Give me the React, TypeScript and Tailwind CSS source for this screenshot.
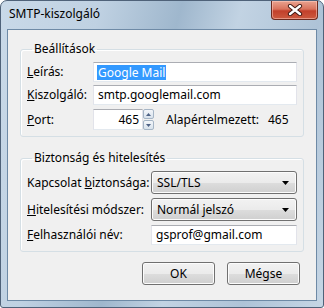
import React from "react";

const inputCls =
  "h-[20px] bg-white border border-[#e2e3ea] border-t-[#abadb3] border-b-[#e3e9ef] px-[3px] flex items-center leading-none";

const btnCls =
  "h-[23px] rounded-[3px] border border-[#707070] bg-[linear-gradient(#f2f2f2_0%,#ebebeb_50%,#dddddd_51%,#cfcfcf_100%)] shadow-[inset_0_0_0_1px_#fcfcfc] flex items-center";

function Combo({ value }: { value: string }) {
  return (
    <div className={`${btnCls} h-[22px] px-[5px] justify-between`}>
      <span>{value}</span>
      <svg width="7" height="4" viewBox="0 0 7 4" className="mr-[2px]">
        <path d="M0 0h7L3.5 4z" fill="#000" />
      </svg>
    </div>
  );
}

function Spinner() {
  return (
    <div className="w-[11px] h-[21px] flex flex-col gap-[1px] ml-[0px]">
      {[0, 1].map((i) => (
        <div
          key={i}
          className="flex-1 rounded-[2px] border border-[#a5b5c6] bg-[linear-gradient(#f3f6fa,#d8e2ec)] flex items-center justify-center"
        >
          <svg width="5" height="3" viewBox="0 0 5 3">
            <path d={i === 0 ? "M0 3h5L2.5 0z" : "M0 0h5L2.5 3z"} fill="#4d6185" />
          </svg>
        </div>
      ))}
    </div>
  );
}

export default function App() {
  return (
    <div className="w-[324px] h-[308px] font-['Noto_Sans',sans-serif] text-[12px] text-black">
      <div className="h-full flex flex-col rounded-t-[7px] rounded-b-[3px] border border-[#4f6279] bg-[linear-gradient(105deg,#c9d9e8_0%,#bfd1e2_25%,#9fb7cd_45%,#c2d3e3_60%,#aec3d7_80%,#c6d6e5_100%)]">
        {/* title bar */}
        <div className="h-[28px] flex items-start">
          <span className="pl-[8px] pt-[5px] leading-[16px]">SMTP-kiszolgáló</span>
          <div className="ml-auto mr-[5px] w-[47px] h-[19px] rounded-b-[4px] border border-t-0 border-[#6b2a1f] bg-[linear-gradient(#e9a390_0%,#d9735d_45%,#c2402b_55%,#cc5a3f_100%)] shadow-[inset_0_0_0_1px_rgba(255,210,200,0.5)] flex items-center justify-center">
            <svg width="16" height="12" viewBox="0 0 16 12">
              <path d="M3 2l10 8M13 2L3 10" stroke="#3d1711" strokeWidth="4.2" strokeLinecap="round" />
              <path d="M3 2l10 8M13 2L3 10" stroke="#fff" strokeWidth="2.4" strokeLinecap="round" />
            </svg>
          </div>
        </div>

        {/* client area */}
        <div className="flex-1 mx-[6px] mb-[6px] border border-[#6e8aa6] bg-[#f0f0f0] px-[12px] pt-[11px] flex flex-col">
          <fieldset className="rounded-[3px] border border-[#d5dfe5] px-[6px] pt-[5px] pb-[6px] shadow-[inset_1px_1px_0_#fff]">
            <legend className="ml-[5px] px-[2px] leading-[16px]">Beállítások</legend>
            <div className="grid grid-cols-[66px_1fr] items-center gap-y-[3px]">
              <span>
                <u>L</u>eírás:
              </span>
              <div className={inputCls}>
                <span className="bg-[#3399ff] text-white px-[1px] leading-[15px]">Google Mail</span>
              </div>
              <span>
                <u>K</u>iszolgáló:
              </span>
              <div className={inputCls}>
                <span className="pl-[1px]">smtp.googlemail.com</span>
              </div>
              <span className="mt-[1px]">
                <u>P</u>ort:
              </span>
              <div className="flex items-center mt-[1px]">
                <div className={`${inputCls} h-[21px] w-[50px] justify-end`}>465</div>
                <Spinner />
                <span className="ml-[12px]">Alapértelmezett:</span>
                <span className="ml-[9px]">465</span>
              </div>
            </div>
          </fieldset>

          <fieldset className="mt-[13px] rounded-[3px] border border-[#d5dfe5] px-[6px] pt-[5px] pb-[6px] shadow-[inset_1px_1px_0_#fff]">
            <legend className="ml-[5px] px-[2px] leading-[16px]">Biztonság és hitelesítés</legend>
            <div className="grid grid-cols-[124px_1fr] items-center gap-y-[4px]">
              <span>
                Kapcsolat <u>b</u>iztonsága:
              </span>
              <Combo value="SSL/TLS" />
              <span>
                <u>H</u>itelesítési módszer:
              </span>
              <Combo value="Normál jelszó" />
              <span>
                <u>F</u>elhasználói név:
              </span>
              <div className={inputCls}>
                <span className="pl-[1px]">gsprof@gmail.com</span>
              </div>
            </div>
          </fieldset>

          <div className="mt-[10px] mr-[4px] flex justify-end gap-[12px]">
            <button className={`${btnCls} w-[73px] justify-center border-[#3c7fb1] shadow-[inset_0_0_0_1px_#48d8fb,inset_0_0_0_2px_#e8f4fb]`}>
              OK
            </button>
            <button className={`${btnCls} w-[73px] justify-center`}>Mégse</button>
          </div>
        </div>
      </div>
    </div>
  );
}
